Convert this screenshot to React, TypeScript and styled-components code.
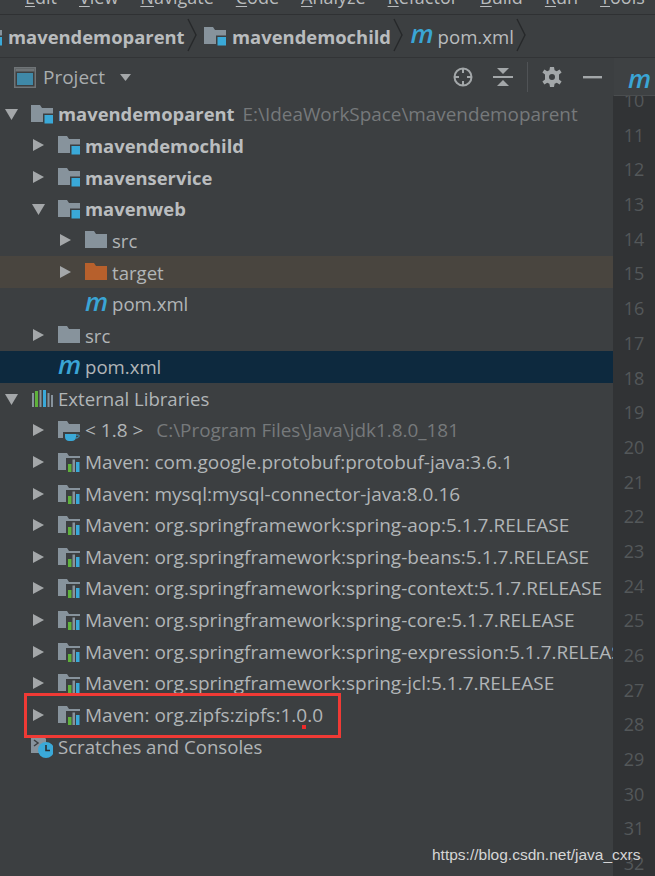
import React from 'react';
import styled, { createGlobalStyle } from 'styled-components';

const GlobalStyle = createGlobalStyle`
  html, body { margin: 0; padding: 0; background: #3c3f41; }
  body { font-family: "Open Sans", "Noto Sans", sans-serif; }
`;

const Page = styled.div`
  position: relative;
  width: 655px;
  height: 876px;
  overflow: hidden;
  background: #3c3f41;
  color: #b4b8ba;
  display: flex;
  flex-direction: column;
`;

const MenuBar = styled.div`
  height: 14px;
  flex: none;
  display: flex;
  align-items: flex-end;
  gap: 22px;
  padding-left: 25px;
  border-bottom: 1px solid #2f3133;
  overflow: hidden;
  font-size: 18px;
  line-height: 24px;
  white-space: nowrap;
`;

const MenuItem = styled.span`
  flex: none;
  height: 24px;
  margin-bottom: 5px;
  color: #b9bcbe;
  &::first-letter {
    text-decoration: underline;
    text-underline-offset: 2px;
  }
`;

const Breadcrumbs = styled.div`
  height: 42px;
  flex: none;
  display: flex;
  align-items: center;
  border-bottom: 1px solid #323436;
  margin-left: -20px;
`;

const Crumb = styled.span<{ $bold?: boolean }>`
  margin-left: ${p => (p.$bold ? 6 : 4)}px;
  font-weight: ${p => (p.$bold ? 700 : 400)};
  font-size: ${p => (p.$bold ? '18.4px' : '18.6px')};
  color: #b9bcbe;
`;

const CrumbArrow = styled.svg`
  flex: none;
  width: 10px;
  height: 42px;
  margin: 0 7.5px 0 2px;
`;

const Body = styled.div`
  flex: 1;
  display: flex;
  min-height: 0;
`;

const Panel = styled.div`
  width: 613px;
  flex: none;
  display: flex;
  flex-direction: column;
`;

const PanelHeader = styled.div`
  height: 40px;
  flex: none;
  box-sizing: border-box;
  display: flex;
  align-items: center;
  padding: 0 10px 2px 14px;
`;

const HeaderTitle = styled.span`
  margin-left: 7px;
  font-size: 19px;
  color: #a9adaf;
`;

const Caret = styled.svg`
  margin-left: 15px;
  width: 11px;
  height: 7px;
`;

const HeaderTools = styled.div`
  margin-left: auto;
  display: flex;
  align-items: center;
  color: #a3a7a9;
`;

const ToolIcon = styled.svg<{ $gap?: number }>`
  width: 22px;
  height: 22px;
  margin-left: ${p => p.$gap ?? 0}px;
`;

const ToolDivider = styled.div`
  width: 1px;
  height: 30px;
  margin: 0 13px 0 13px;
  background: #505356;
`;

const Tree = styled.div`
  flex: 1;
  display: grid;
  grid-auto-rows: 31.65px;
  align-content: start;
`;

const Row = styled.div<{ $depth: number; $tone?: 'selected' | 'ignored' }>`
  display: flex;
  align-items: center;
  padding-left: ${p => 5 + p.$depth * 27}px;
  white-space: nowrap;
  overflow: hidden;
  background: ${p =>
    p.$tone === 'selected' ? '#0d293e' : p.$tone === 'ignored' ? '#49453f' : 'transparent'};
`;

const ArrowSlot = styled.span`
  flex: none;
  width: 13px;
  height: 14px;
  margin-right: 13px;
  display: flex;
  align-items: center;
`;

const IconSlot = styled.span`
  flex: none;
  width: 22px;
  height: 24px;
  margin-right: 5px;
  display: flex;
  align-items: center;
`;

const MavenMark = styled.span`
  font-family: "Open Sans", sans-serif;
  font-style: italic;
  font-weight: 600;
  font-size: 26px;
  line-height: 24px;
  color: #3aa5d5;
  margin-top: -6px;
`;

const Label = styled.span<{ $bold?: boolean; $wide?: boolean }>`
  font-weight: ${p => (p.$bold ? 700 : 400)};
  font-size: ${p => (p.$bold ? '18.4px' : p.$wide ? '19px' : '18.6px')};
  color: ${p => (p.$bold ? '#babdbf' : '#b1b5b7')};
`;

const Hint = styled.span<{ $gap: number }>`
  margin-left: ${p => p.$gap}px;
  font-size: 18.9px;
  color: #76797b;
`;

const Gutter = styled.div`
  flex: 1;
  display: flex;
  flex-direction: column;
  min-width: 0;
`;

const EditorTab = styled.div`
  height: 37px;
  flex: none;
  margin-left: 1px;
  padding-left: 14px;
  background: #3e4143;
  border-bottom: 1px solid #4a4d4f;
  overflow: hidden;
`;

const TabMark = styled(MavenMark)`
  display: block;
  margin-top: 8px;
`;

const LineArea = styled.div`
  flex: 1;
  min-height: 0;
  background: #313335;
  overflow: hidden;
`;

const LineNumbers = styled.div`
  display: grid;
  grid-auto-rows: 34.7px;
  justify-items: center;
  margin-top: -13px;
  font-size: 18px;
  color: #54585a;
`;

const LineNumber = styled.span`
  line-height: 34.7px;
`;

const Highlight = styled.div`
  position: absolute;
  left: 24px;
  top: 693px;
  width: 317px;
  height: 45px;
  box-sizing: border-box;
  border: 3px solid #f03a35;
`;

const RedDot = styled.div`
  position: absolute;
  left: 302px;
  top: 725px;
  width: 4px;
  height: 4px;
  background: #ee2a2a;
`;

const Watermark = styled.div`
  position: absolute;
  left: 432px;
  top: 846px;
  font-family: "Liberation Sans", Arial, sans-serif;
  font-size: 15.5px;
  color: #d6d6d6;
  white-space: nowrap;
`;

const TreeArrow = ({ open }: { open?: boolean }) => (
  <svg width="13" height="14" viewBox="0 0 13 14">
    <path d={open ? 'M0 2H13L6.5 13Z' : 'M1 1L12 7L1 13Z'} fill="#a4a7a9" />
  </svg>
);

const FolderShape = ({ color }: { color: string }) => (
  <path d="M0 3H9L11 6H22V20H0Z" fill={color} />
);

const Folder = ({ color = '#87939c' }: { color?: string }) => (
  <svg width="22" height="24" viewBox="0 0 22 24">
    <FolderShape color={color} />
  </svg>
);

const ModuleFolder = () => (
  <svg width="22" height="24" viewBox="0 0 22 24">
    <FolderShape color="#87939c" />
    <rect x="12" y="11.5" width="11" height="11" fill="#3c3f41" />
    <rect x="13.5" y="13" width="8.5" height="8.5" fill="#3aa9d8" />
  </svg>
);

const LibraryFolder = () => (
  <svg width="22" height="24" viewBox="0 0 22 24">
    <FolderShape color="#87939c" />
    <rect x="8" y="8" width="15" height="16" fill="#3c3f41" />
    <rect x="10" y="14" width="3.5" height="8" fill="#5fb13c" />
    <rect x="14.5" y="9.5" width="2.5" height="12.5" fill="#87939c" />
    <rect x="18" y="12" width="3.5" height="10" fill="#3aa9d8" />
  </svg>
);

const JdkFolder = () => (
  <svg width="22" height="24" viewBox="0 0 22 24">
    <FolderShape color="#87939c" />
    <rect x="5" y="14" width="18" height="10" fill="#3c3f41" />
    <path d="M7 16H18V19C18 21.5 16 23 14 23H11C9 23 7 21.5 7 19Z" fill="#3aa9d8" />
    <path d="M18 17H20.5C21.5 17 21.5 20 18 20" fill="none" stroke="#3aa9d8" />
  </svg>
);

const LibrariesIcon = () => (
  <svg width="22" height="24" viewBox="0 0 22 24">
    <rect x="1" y="6" width="2" height="14" fill="#87939c" />
    <rect x="4" y="4" width="3" height="16" fill="#5fb13c" />
    <rect x="8.5" y="3" width="2" height="17" fill="#87939c" />
    <rect x="12" y="3" width="3" height="17" fill="#3aa9d8" />
    <rect x="16.5" y="6" width="2" height="14" fill="#87939c" />
    <rect x="20" y="8" width="2" height="12" fill="#87939c" />
  </svg>
);

const ScratchesIcon = () => (
  <svg width="22" height="24" viewBox="0 0 22 24">
    <path d="M0 0H12L15 4V10H9V18H0Z" fill="#87939c" />
    <path d="M3 5L7 8L3 11" fill="none" stroke="#3c3f41" strokeWidth="1.5" />
    <circle cx="15" cy="15" r="8" fill="#3aa9d8" />
    <path d="M15 10V15.5H19" fill="none" stroke="#2b2d2f" strokeWidth="1.6" />
  </svg>
);

const ProjectIcon = () => (
  <svg width="22" height="21" viewBox="0 0 22 21">
    <rect x="0.75" y="0.75" width="20.5" height="19.5" fill="none" stroke="#6f7477" strokeWidth="1.5" />
    <rect x="1.5" y="1.5" width="19" height="3" fill="#6f7477" />
    <rect x="3" y="6" width="16" height="12" fill="#3f89a8" />
  </svg>
);

type Item = {
  depth: number;
  text: string;
  icon: React.ReactNode;
  arrow?: 'open' | 'closed';
  bold?: boolean;
  wide?: boolean;
  hint?: string;
  tone?: 'selected' | 'ignored';
};

const libs = [
  'Maven: com.google.protobuf:protobuf-java:3.6.1',
  'Maven: mysql:mysql-connector-java:8.0.16',
  'Maven: org.springframework:spring-aop:5.1.7.RELEASE',
  'Maven: org.springframework:spring-beans:5.1.7.RELEASE',
  'Maven: org.springframework:spring-context:5.1.7.RELEASE',
  'Maven: org.springframework:spring-core:5.1.7.RELEASE',
  'Maven: org.springframework:spring-expression:5.1.7.RELEASE',
  'Maven: org.springframework:spring-jcl:5.1.7.RELEASE',
  'Maven: org.zipfs:zipfs:1.0.0',
];

const items: Item[] = [
  { depth: 0, text: 'mavendemoparent', icon: <ModuleFolder />, arrow: 'open', bold: true, hint: 'E:\\IdeaWorkSpace\\mavendemoparent' },
  { depth: 1, text: 'mavendemochild', icon: <ModuleFolder />, arrow: 'closed', bold: true },
  { depth: 1, text: 'mavenservice', icon: <ModuleFolder />, arrow: 'closed', bold: true },
  { depth: 1, text: 'mavenweb', icon: <ModuleFolder />, arrow: 'open', bold: true },
  { depth: 2, text: 'src', icon: <Folder />, arrow: 'closed' },
  { depth: 2, text: 'target', icon: <Folder color="#b7602c" />, arrow: 'closed', tone: 'ignored' },
  { depth: 2, text: 'pom.xml', icon: <MavenMark>m</MavenMark> },
  { depth: 1, text: 'src', icon: <Folder />, arrow: 'closed' },
  { depth: 1, text: 'pom.xml', icon: <MavenMark>m</MavenMark>, tone: 'selected' },
  { depth: 0, text: 'External Libraries', icon: <LibrariesIcon />, arrow: 'open' },
  { depth: 1, text: '< 1.8 >', wide: true, icon: <JdkFolder />, arrow: 'closed', hint: 'C:\\Program Files\\Java\\jdk1.8.0_181' },
  ...libs.map((text): Item => ({ depth: 1, text, wide: true, icon: <LibraryFolder />, arrow: 'closed' })),
  { depth: 0, text: 'Scratches and Consoles', icon: <ScratchesIcon /> },
];

const menu = ['Edit', 'View', 'Navigate', 'Code', 'Analyze', 'Refactor', 'Build', 'Run', 'Tools'];
const lineNumbers = Array.from({ length: 23 }, (_, i) => i + 10);

const Chevron = () => (
  <CrumbArrow viewBox="0 0 10 42">
    <path d="M1 4L9 20L1 36" fill="none" stroke="#26282a" strokeWidth="1.4" />
  </CrumbArrow>
);

const App: React.FC = () => (
  <Page>
    <GlobalStyle />
    <MenuBar>
      {menu.map(m => (
        <MenuItem key={m}>{m}</MenuItem>
      ))}
    </MenuBar>
    <Breadcrumbs>
      <ModuleFolder />
      <Crumb $bold>mavendemoparent</Crumb>
      <Chevron />
      <ModuleFolder />
      <Crumb $bold>mavendemochild</Crumb>
      <Chevron />
      <MavenMark>m</MavenMark>
      <Crumb>pom.xml</Crumb>
      <Chevron />
    </Breadcrumbs>
    <Body>
      <Panel>
        <PanelHeader>
          <ProjectIcon />
          <HeaderTitle>Project</HeaderTitle>
          <Caret viewBox="0 0 11 7">
            <path d="M0 0H11L5.5 7Z" fill="#a4a7a9" />
          </Caret>
          <HeaderTools>
            <ToolIcon viewBox="0 0 22 22" fill="none" stroke="currentColor" strokeWidth="2">
              <circle cx="11" cy="11" r="8.5" />
              <path d="M11 2V7M11 15V20M2 11H7M15 11H20" />
            </ToolIcon>
            <ToolIcon viewBox="0 0 22 22" $gap={18} fill="currentColor">
              <path d="M5 2H17L11 8Z" />
              <rect x="1" y="10" width="20" height="2" />
              <path d="M5 20H17L11 14Z" />
            </ToolIcon>
            <ToolDivider />
            <ToolIcon viewBox="0 0 22 22" fill="currentColor">
              <path
                fillRule="evenodd"
                d="M9 1H13L13.6 4.2L15.8 5.2L18.6 3.4L20.6 6.6L18 8.6V13.4L20.6 15.4L18.6 18.6L15.8 16.8L13.6 17.8L13 21H9L8.4 17.8L6.2 16.8L3.4 18.6L1.4 15.4L4 13.4V8.6L1.4 6.6L3.4 3.4L6.2 5.2L8.4 4.2ZM11 8A3 3 0 1 0 11 14A3 3 0 1 0 11 8Z"
              />
            </ToolIcon>
            <ToolIcon viewBox="0 0 22 22" $gap={18} fill="currentColor">
              <rect x="2" y="10" width="19" height="2.4" />
            </ToolIcon>
          </HeaderTools>
        </PanelHeader>
        <Tree>
          {items.map((it, i) => (
            <Row key={i} $depth={it.depth} $tone={it.tone}>
              <ArrowSlot>{it.arrow && <TreeArrow open={it.arrow === 'open'} />}</ArrowSlot>
              <IconSlot>{it.icon}</IconSlot>
              <Label $bold={it.bold} $wide={it.wide}>{it.text}</Label>
              {it.hint && <Hint $gap={it.bold ? 8 : 13}>{it.hint}</Hint>}
            </Row>
          ))}
        </Tree>
      </Panel>
      <Gutter>
        <EditorTab>
          <TabMark>m</TabMark>
        </EditorTab>
        <LineArea>
          <LineNumbers>
            {lineNumbers.map(n => (
              <LineNumber key={n}>{n}</LineNumber>
            ))}
          </LineNumbers>
        </LineArea>
      </Gutter>
    </Body>
    <Highlight />
    <RedDot />
    <Watermark>https://blog.csdn.net/java_cxrs</Watermark>
  </Page>
);

export default App;
